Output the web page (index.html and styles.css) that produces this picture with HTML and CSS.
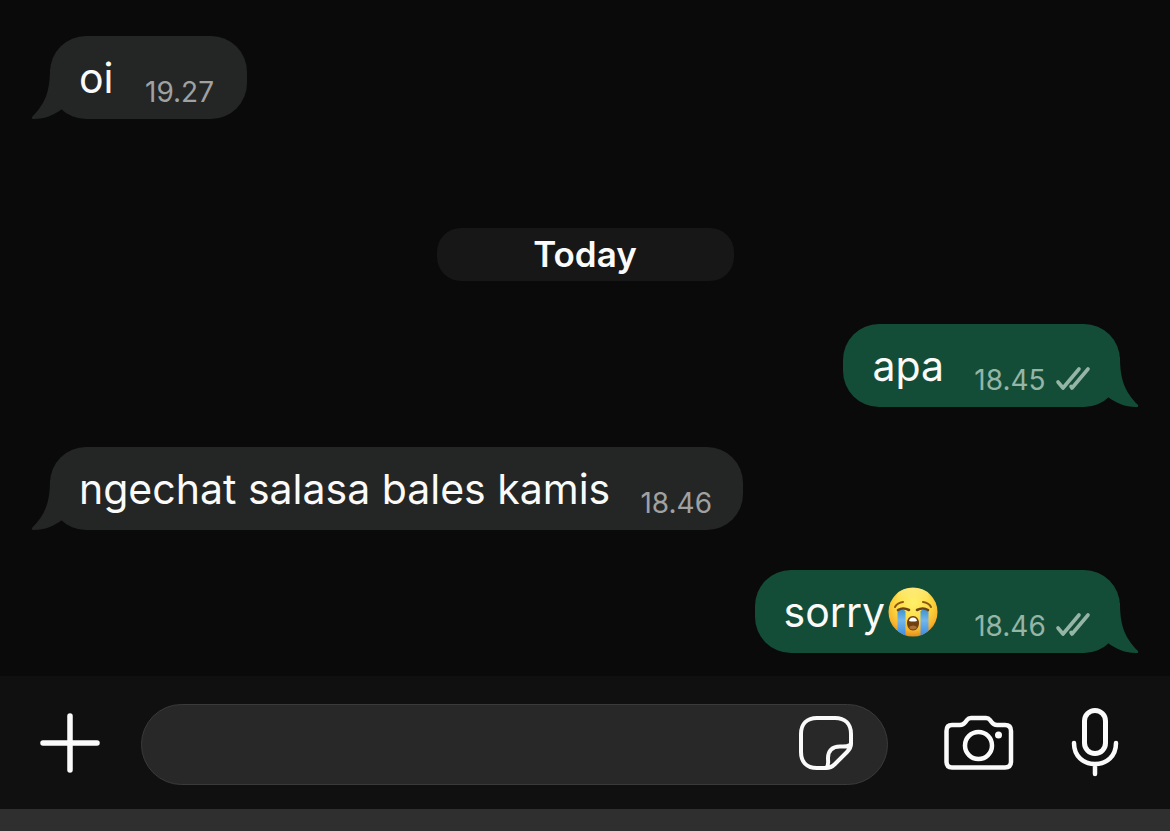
FILE: index.html
```html
<!DOCTYPE html>
<html lang="id">
<head>
    <meta charset="UTF-8">
    <meta name="viewport" content="width=device-width, initial-scale=1">
    <title>Chat</title>
    <link rel="stylesheet" href="styles.css">
</head>
<body>
    <!-- shared shapes -->
    <svg class="sprite" aria-hidden="true">
        <symbol id="tail" viewBox="0 0 32 50">
            <path d="M19 0C19 21 15 34 1 48Q0 50 3 50C14 50 23 46 31 40V0Z"/>
        </symbol>
        <symbol id="ticks" viewBox="0 0 36 26">
            <path d="M3 16L8 22L24 3M16 20.5L17 22L33 3" fill="none" stroke="currentColor" stroke-width="3.6" stroke-linecap="round" stroke-linejoin="round"/>
        </symbol>
    </svg>

    <main class="chat">
        <div class="message received">
            <svg class="tail" aria-hidden="true"><use href="#tail"/></svg>
            <span class="text">oi</span>
            <time class="time">19.27</time>
        </div>

        <div class="day">Today</div>

        <div class="message sent">
            <span class="text">apa</span>
            <time class="time">18.45</time>
            <svg class="ticks" role="img" aria-label="Read"><use href="#ticks"/></svg>
            <svg class="tail" aria-hidden="true"><use href="#tail"/></svg>
        </div>

        <div class="message received">
            <svg class="tail" aria-hidden="true"><use href="#tail"/></svg>
            <span class="text">ngechat salasa bales kamis</span>
            <time class="time">18.46</time>
        </div>

        <div class="message sent">
            <span class="text">sorry</span>
            <svg class="emoji" viewBox="0 0 50 50" role="img" aria-label="😭">
                <defs>
                    <radialGradient id="face" cx="50%" cy="32%" r="68%">
                        <stop offset="0" stop-color="#fff16a"/>
                        <stop offset="0.5" stop-color="#fddc45"/>
                        <stop offset="0.82" stop-color="#f8b52c"/>
                        <stop offset="1" stop-color="#e58d1b"/>
                    </radialGradient>
                    <linearGradient id="shine" x1="0" y1="0" x2="0" y2="1">
                        <stop offset="0" stop-color="#fffbd0" stop-opacity="0.4"/>
                        <stop offset="1" stop-color="#fff07a" stop-opacity="0"/>
                    </linearGradient>
                    <linearGradient id="tear" x1="0" y1="0" x2="0" y2="1">
                        <stop offset="0" stop-color="#3d91d0"/>
                        <stop offset="0.4" stop-color="#74b7ec"/>
                        <stop offset="1" stop-color="#3888df"/>
                    </linearGradient>
                    <clipPath id="head"><circle cx="25" cy="25" r="24.5"/></clipPath>
                </defs>
                <circle cx="25" cy="25" r="24.5" fill="url(#face)"/>
                <ellipse cx="25" cy="9" rx="16" ry="8" fill="url(#shine)"/>
                <g clip-path="url(#head)">
                    <path d="M9.5 23Q14 21 17.5 24V50H9.5Z" fill="url(#tear)"/>
                    <path d="M32.5 24Q36 21 40.5 23V50H32.5Z" fill="url(#tear)"/>
                </g>
                <g fill="none" stroke-linecap="round">
                    <path d="M7 20Q9 16 15 15M35 15Q41 16 43 20" stroke="#8b5714" stroke-width="2"/>
                    <path d="M10 23Q15 20 21 23M29 23Q35 20 40 23" stroke="#704411" stroke-width="2.6"/>
                </g>
                <path d="M25 29C28.5 29 31 32 31 36S28.5 43.5 25 43.5S19 40 19 36S21.5 29 25 29Z" fill="#70400f"/>
                <path d="M21 34Q21.500 30.5 25 30.5T29 34Q25 35 21 34Z" fill="#fff"/>
                <path d="M21 40Q25 37 29 40Q28 42.5 25 42.5T21 40Z" fill="#a8703a"/>
            </svg>
            <time class="time">18.46</time>
            <svg class="ticks" role="img" aria-label="Read"><use href="#ticks"/></svg>
            <svg class="tail" aria-hidden="true"><use href="#tail"/></svg>
        </div>
    </main>

    <form class="composer">
        <button class="icon-button" type="button" aria-label="Attach">
            <svg class="icon" width="60" height="60" viewBox="0 0 60 60">
                <path d="M30 3V57M3 30H57" stroke-width="5.5"/>
            </svg>
        </button>
        <div class="field">
            <input class="input" type="text" aria-label="Message">
            <button class="icon-button" type="button" aria-label="Stickers">
                <svg class="icon" width="56" height="56" viewBox="0 0 56 56">
                    <path d="M19 3H37C47 3 53 9 53 19V29C53 32 51.5 34.5 49 37L37 49Q33 53 28 53H19C9 53 3 47 3 37V19C3 9 9 3 19 3ZM52 30C49 32 46 31.5 42 31.5C34 31.5 30 36 30 43C30 47 31 50 28.5 52.5" stroke-width="4"/>
                </svg>
            </button>
        </div>
        <button class="icon-button camera" type="button" aria-label="Camera">
            <svg class="icon" width="70" height="56" viewBox="0 0 70 56">
                <path d="M8 10H16C19 10 20 9 21.5 7L23 5Q24.5 3 27 3H42Q44.5 3 46 5L47.5 7C49 9 50 10 53 10H61Q67 10 67 16V46.5Q67 52.5 61 52.5H8Q2.5 52.500 2.5 46.5V16Q2.5 10 8 10Z" stroke-width="4.5"/>
                <circle cx="34.5" cy="30.5" r="13.5" stroke-width="4.5"/>
                <circle class="dot" cx="54.5" cy="20" r="3.5"/>
            </svg>
        </button>
        <button class="icon-button" type="button" aria-label="Record voice message">
            <svg class="icon" width="48" height="70" viewBox="0 0 48 70">
                <rect x="13.5" y="2.5" width="21" height="43" rx="10.5" stroke-width="5"/>
                <path d="M3 35C3 48 12 56 24 56S45 48 45 35M24 56V66" stroke-width="4.5"/>
            </svg>
        </button>
    </form>
    <div class="bottom-bar"></div>
</body>
</html>
```
FILE: styles.css
```css
* {
    box-sizing: border-box;
}

body {
    display: flex;
    flex-direction: column;
    min-height: 100vh;
    margin: 0;
    background-color: #0a0a0a;
    color: #fafafa;
    font-family: Inter, "Liberation Sans", sans-serif;
}

.sprite {
    position: absolute;
    width: 0;
    height: 0;
}

.chat {
    flex: 1;
    display: flex;
    flex-direction: column;
    gap: 40px;
    padding: 36px 50px 23px;
}

/* bubbles */
.message {
    position: relative;
    display: flex;
    align-items: center;
    height: 83px;
    padding: 0 29px;
    border-radius: 36px;
}

.received {
    align-self: flex-start;
    background-color: #242625;
    color: #fafafa;
}

.sent {
    align-self: flex-end;
    background-color: #144d37;
}

.text {
    font-size: 41px;
    line-height: 50px;
}

.time {
    align-self: flex-end;
    min-width: 76px;
    margin-left: 28px;
    padding-bottom: 11px;
    color: #a0a1a1;
    font-size: 28px;
    line-height: 32px;
    text-align: center;
}

.sent .time,
.ticks {
    color: #95b5a7;
}

.ticks {
    align-self: flex-end;
    width: 36px;
    height: 26px;
    margin-left: 7px;
    margin-bottom: 15px;
}

.emoji {
    width: 50px;
    height: 50px;
    margin: 0 6px 0 3px;
}

/* hangs outside the bottom corner of the bubble */
.tail {
    position: absolute;
    bottom: 0;
    left: -19px;
    width: 32px;
    height: 50px;
    fill: #242625;
}

.sent .tail {
    left: auto;
    right: -19px;
    fill: #144d37;
    transform: scaleX(-1);
}

.day {
    align-self: center;
    width: 297px;
    margin: 69px 0 3px;
    border-radius: 24px;
    background-color: #171717;
    font-size: 35px;
    font-weight: 600;
    line-height: 53px;
    text-align: center;
}

/* bottom input row */
.composer {
    display: flex;
    align-items: center;
    padding: 28px 51px 24px 40px;
    background-color: #101010;
}

.icon-button {
    display: flex;
    padding: 0 0 3px;
    border: none;
    background: none;
    color: #fafafa;
    cursor: pointer;
}

.icon {
    fill: none;
    stroke: currentColor;
    stroke-linecap: round;
    stroke-linejoin: round;
}

.dot {
    fill: currentColor;
    stroke: none;
}

.field {
    flex: 1;
    display: flex;
    align-items: center;
    min-width: 0;
    height: 81px;
    margin: 0 56px 0 41px;
    padding: 0 33px;
    border: 1px solid #3a3a3a;
    border-radius: 41px;
    background-color: #282828;
}

.input {
    flex: 1;
    min-width: 0;
    border: none;
    outline: none;
    background: none;
    color: inherit;
    font: inherit;
    font-size: 41px;
}

.camera {
    margin-right: 57px;
}

.bottom-bar {
    height: 22px;
    background-color: #2f2f2f;
}
```
